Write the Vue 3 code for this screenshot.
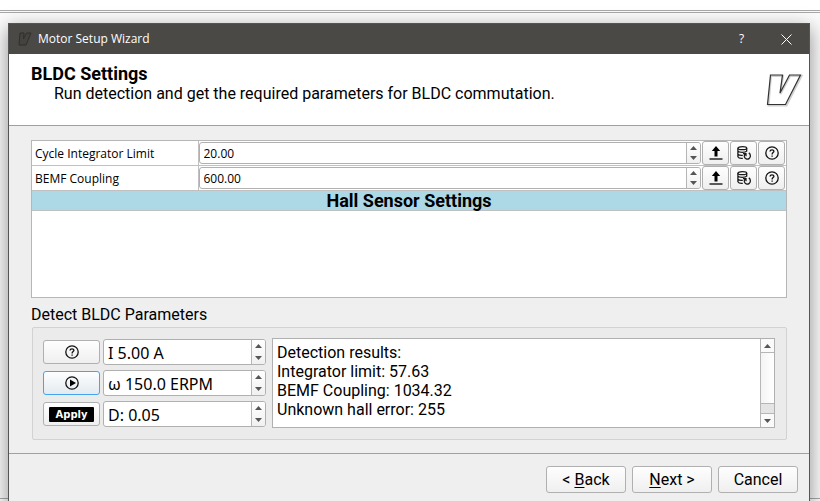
<script setup>
import { reactive, ref } from 'vue'

const params = reactive([
  { id: 'cycle', label: 'Cycle Integrator Limit', value: '20.00' },
  { id: 'bemf', label: 'BEMF Coupling', value: '600.00' },
])

const detect = reactive([
  { id: 'current', name: 'Current', action: 'help', prefix: 'I ', value: 5, digits: 2, suffix: ' A', step: 0.5 },
  { id: 'erpm', name: 'Speed', action: 'run', prefix: 'ω ', value: 150, digits: 1, suffix: ' ERPM', step: 10 },
  { id: 'duty', name: 'Duty', action: 'apply', prefix: 'D: ', value: 0.05, digits: 2, suffix: '', step: 0.01 },
])

const actionLabels = { help: 'Help', run: 'Run detection', apply: 'Apply' }

const results = ref(
  'Detection results:\nIntegrator limit: 57.63\nBEMF Coupling: 1034.32\nUnknown hall error: 255'
)

const format = (d) => d.prefix + d.value.toFixed(d.digits) + d.suffix
const nudge = (p, by) => { p.value = (Number(p.value) + by).toFixed(2) }
</script>

<template>
  <div class="desktop">
    <div class="backdrop"></div>
    <main class="dialog">
      <header class="titlebar">
        <svg class="mini-logo" viewBox="0 0 14 14" aria-hidden="true">
          <path d="M2 1H6L5.500 7L8.500 1H13L8 13H1Z" />
        </svg>
        <span class="caption">Motor Setup Wizard</span>
        <button class="win-btn" aria-label="Help">?</button>
        <button class="win-btn" aria-label="Close">
          <svg width="11" height="11" viewBox="0 0 11 11"><path d="M.5 .5L10.500 10.500M10.500 .5L.5 10.500" stroke="#fff" stroke-width="1" /></svg>
        </button>
      </header>

      <section class="intro">
        <div>
          <h1>BLDC Settings</h1>
          <p>Run detection and get the required parameters for BLDC commutation.</p>
        </div>
        <svg class="logo" width="40" height="38" viewBox="0 0 40 38" aria-hidden="true">
          <path class="logo-shade" d="M7 4H19L16.500 22L26 4H37.500L22.500 33.500H4.500Z" />
          <path class="logo-line" d="M6.500 3H18.500L16 21L25.500 3H36.500L21.500 32.500H3.500Z" />
        </svg>
      </section>

      <section class="content">
        <div class="list">
          <table>
            <tbody>
              <tr v-for="p in params" :key="p.id">
                <th scope="row"><label :for="p.id">{{ p.label }}</label></th>
                <td>
                  <div class="editor">
                    <div class="spin small">
                      <input :id="p.id" v-model="p.value" type="text" />
                      <div class="steps">
                        <button aria-label="Increase" @click="nudge(p, 1)"><svg width="7" height="4" viewBox="0 0 7 4"><path d="M0 4L3.500 0L7 4Z" /></svg></button>
                        <button aria-label="Decrease" @click="nudge(p, -1)"><svg width="7" height="4" viewBox="0 0 7 4"><path d="M0 0H7L3.500 4Z" /></svg></button>
                      </div>
                    </div>
                    <button class="tool" aria-label="Upload">
                      <svg width="14" height="14" viewBox="0 0 14 14"><path d="M7 0L11.200 5H8.500V10.500H5.500V5H2.800Z" /><path d="M.5 13H13.500" stroke="#333" stroke-width="1.600" /></svg>
                    </button>
                    <button class="tool" aria-label="Restore default">
                      <svg width="14" height="14" viewBox="0 0 14 14" fill="none" stroke="#1a1a1a" stroke-width="1.300">
                        <ellipse cx="5.300" cy="2.200" rx="4.400" ry="1.500" />
                        <path d="M.9 2.200V10.800C1.500 12 3.500 12.500 5.800 12.300M.9 5.200C2 6.700 8.500 6.700 9.700 5.200V2.200M.9 8.200C2 9.300 3.800 9.500 5.800 9.300" />
                        <path d="M11.800 6.900C13.800 8.200 13.900 11.300 12 12.600C10.200 13.800 7.900 12.900 7.400 10.900C7.200 9.900 7.400 9 8 8.200M6 7.600H9V10.300" />
                      </svg>
                    </button>
                    <button class="tool" aria-label="Help">
                      <svg width="14" height="14" viewBox="0 0 14 14" fill="none" stroke="#111" stroke-width="1.300">
                        <circle cx="7" cy="7" r="6.200" /><path d="M5 5.500C5.100 3.200 9 3.300 8.900 5.400C8.800 6.700 7.100 6.600 7.100 8.400M7.100 9.500V10.800" />
                      </svg>
                    </button>
                  </div>
                </td>
              </tr>
              <tr class="band"><th colspan="2" scope="colgroup">Hall Sensor Settings</th></tr>
            </tbody>
          </table>
        </div>

        <h2>Detect BLDC Parameters</h2>
        <div class="group">
          <div class="controls">
            <template v-for="d in detect" :key="d.id">
              <button class="action" :class="{ active: d.action === 'run' }" :aria-label="actionLabels[d.action]">
                <svg v-if="d.action === 'help'" width="14" height="14" viewBox="0 0 14 14" fill="none" stroke="#111" stroke-width="1.300">
                  <circle cx="7" cy="7" r="6.200" /><path d="M5 5.500C5.100 3.200 9 3.300 8.900 5.400C8.800 6.700 7.100 6.600 7.100 8.400M7.100 9.500V10.800" />
                </svg>
                <svg v-else-if="d.action === 'run'" width="14" height="14" viewBox="0 0 14 14">
                  <circle cx="7" cy="7" r="6.200" fill="none" stroke="#111" stroke-width="1.300" /><path d="M5 3.500L11 7L5 10.500Z" />
                </svg>
                <span v-else class="apply">Apply</span>
              </button>
              <div class="spin large">
                <input :aria-label="d.name" type="text" :value="format(d)" />
                <div class="steps">
                  <button aria-label="Increase" @click="d.value += d.step"><svg width="7" height="4" viewBox="0 0 7 4"><path d="M0 4L3.500 0L7 4Z" /></svg></button>
                  <button aria-label="Decrease" @click="d.value -= d.step"><svg width="7" height="4" viewBox="0 0 7 4"><path d="M0 0H7L3.500 4Z" /></svg></button>
                </div>
              </div>
            </template>
          </div>
          <div class="results">
            <textarea v-model="results" aria-label="Detection results" readonly></textarea>
            <div class="scroll">
              <button aria-label="Scroll up"><svg width="7" height="4" viewBox="0 0 7 4"><path d="M0 4L3.500 0L7 4Z" /></svg></button>
              <div class="track"><div class="thumb"></div></div>
              <button aria-label="Scroll down"><svg width="7" height="4" viewBox="0 0 7 4"><path d="M0 0H7L3.500 4Z" /></svg></button>
            </div>
          </div>
        </div>
      </section>

      <footer>
        <button>&lt; <u>B</u>ack</button>
        <button><u>N</u>ext &gt;</button>
        <button>Cancel</button>
      </footer>
    </main>
  </div>
</template>

<style>
body { margin: 0; background: #fff; }
</style>

<style scoped>
* { box-sizing: border-box; }
.desktop {
  position: relative;
  height: 100vh;
  overflow: hidden;
  padding: 23px 10px 0 8px;
  font: 16px/20px Roboto, "Liberation Sans", sans-serif;
  color: #000;
}
.backdrop {
  position: absolute;
  inset: 10px 0 2px;
  border-top: 3px double #a8a8a8;
  border-bottom: 1px solid #a8a8a8;
  background: #fbfbfb;
}
button { font: inherit; color: inherit; padding: 0; margin: 0; }
svg { display: block; }
.dialog {
  position: relative;
  min-height: 100%;
  border: 1px solid #555;
  background: #efefef;
  box-shadow: 0 6px 18px 1px rgba(0, 0, 0, 0.4);
}
.titlebar {
  display: flex;
  align-items: center;
  height: 30px;
  padding-left: 9px;
  background: #4b4946;
  color: #fff;
  font: 12px/16px "Open Sans", "Noto Sans", sans-serif;
}
.mini-logo { width: 14px; height: 14px; fill: #454340; stroke: #302f2d; }
.caption { flex: 1; margin-left: 6px; }
.win-btn {
  display: grid;
  place-items: center;
  width: 45px;
  height: 28px;
  border: 0;
  background: none;
}
.intro {
  display: flex;
  justify-content: space-between;
  height: 72px;
  padding: 9px 5px 0 22px;
  border-bottom: 1px solid #a0a0a0;
  background: #fff;
}
h1 { margin: 0; font-size: 18px; font-weight: 700; line-height: 21px; }
.intro p { margin: 0; padding-left: 23px; }
.logo { margin-top: 9px; fill: none; }
.logo-line { stroke: #333; stroke-width: 1.2; }
.logo-shade { stroke: #d0d0d0; stroke-width: 2; }
.content { padding: 14px 22px 13px; }
.list {
  min-height: 158px;
  border: 1px solid #b6b6b6;
  background: #fff;
}
table { width: 100%; border-collapse: collapse; }
th, td { padding: 0; border-bottom: 1px solid #c0c0c0; }
tr th { width: 166px; border-right: 1px solid #c0c0c0; }
tr:not(.band) th {
  padding: 2px 0 0 3px;
  text-align: left;
  font: 12px/20px "Open Sans", "Noto Sans", sans-serif;
}
.band th { border-right: 0; background: #add8e6; font-size: 18px; font-weight: 700; line-height: 19px; }
.editor { display: flex; gap: 1px; height: 24px; padding-right: 1px; }
.spin {
  display: flex;
  min-width: 0;
  border: 1px solid #b0b0b0;
  border-radius: 3px;
  background: #fff;
  overflow: hidden;
}
.spin input {
  flex: 1;
  min-width: 0;
  width: 0;
  padding: 1px 0 0 4px;
  border: 0;
  outline: 0;
  background: none;
  color: inherit;
}
.small { flex: 1; margin: 1px 0; }
.small input { font: 12px/20px "Open Sans", "Noto Sans", sans-serif; }
.large { height: 26px; }
.large input { font: 16px/24px "Noto Sans", "Open Sans", sans-serif; }
.steps {
  display: flex;
  flex-direction: column;
  flex: none;
  width: 14px;
  border-left: 1px solid #b6b6b6;
  background: linear-gradient(#fff, #f0f0f0);
}
.steps button {
  flex: 1;
  display: grid;
  place-items: center;
  border: 0;
  background: none;
}
.steps svg, .scroll svg { fill: #555; }
.tool, .action, footer button {
  border: 1px solid #b0b0b0;
  border-radius: 3px;
  background: linear-gradient(#fefefe, #efefef);
}
.tool { display: grid; place-items: center; width: 27px; height: 24px; }
h2 { margin: 7px 0 2px; font-size: 16px; font-weight: 400; line-height: 20px; }
.group {
  display: flex;
  gap: 6px;
  margin-left: 1px;
  padding: 10px 11px 11px 10px;
  border: 1px solid #d2d2d2;
  border-radius: 2px;
  background: #ebebeb;
}
.controls {
  display: grid;
  grid-template-columns: 57px 163px;
  gap: 5px 3px;
  align-items: center;
  align-content: center;
}
.action { display: grid; place-items: center; height: 24px; }
.active { border-color: #43a5ee; background: linear-gradient(#fdfeff, #e4eaf0); }
.apply {
  width: 45px;
  border-radius: 1px;
  background: #000;
  color: #fff;
  font: bold 10px/15px "DejaVu Sans", sans-serif;
}
.results { flex: 1; display: flex; min-width: 0; height: 90px; border: 1px solid #b0b0b0; background: #fff; }
textarea {
  flex: 1;
  min-width: 0;
  padding: 4px;
  border: 0;
  outline: 0;
  resize: none;
  overflow: hidden;
  background: none;
  color: inherit;
  font: 16px/19px Roboto, "Liberation Sans", sans-serif;
}
.scroll {
  display: flex;
  flex-direction: column;
  width: 14px;
  border-left: 1px solid #b6b6b6;
}
.scroll button { display: grid; place-items: center; height: 13px; border: 0; background: #fafafa; }
.track {
  flex: 1;
  padding-bottom: 9px;
  border: solid #b6b6b6;
  border-width: 1px 0;
  background: #e4e4e4;
}
.thumb { height: 100%; border-bottom: 1px solid #b6b6b6; background: linear-gradient(90deg, #f4f4f4, #fff); }
footer {
  display: flex;
  justify-content: flex-end;
  gap: 6px;
  padding: 12px 11px;
  border-top: 1px solid #a0a0a0;
}
footer button { width: 80px; height: 27px; }
u { text-underline-offset: 2px; }
</style>
